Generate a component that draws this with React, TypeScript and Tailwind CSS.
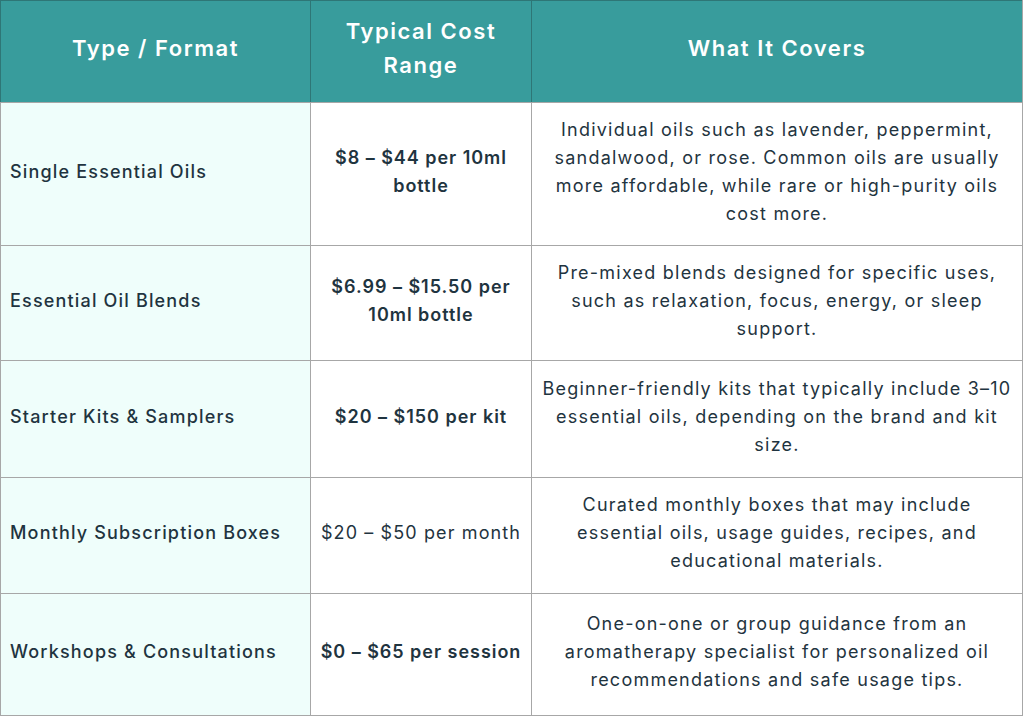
import React from "react";

const rows: { type: string; cost: string[]; costBold: boolean; covers: string[] }[] = [
  {
    type: "Single Essential Oils",
    cost: ["$8 – $44 per 10ml", "bottle"],
    costBold: true,
    covers: [
      "Individual oils such as lavender, peppermint,",
      "sandalwood, or rose. Common oils are usually",
      "more affordable, while rare or high-purity oils",
      "cost more.",
    ],
  },
  {
    type: "Essential Oil Blends",
    cost: ["$6.99 – $15.50 per", "10ml bottle"],
    costBold: true,
    covers: [
      "Pre-mixed blends designed for specific uses,",
      "such as relaxation, focus, energy, or sleep",
      "support.",
    ],
  },
  {
    type: "Starter Kits & Samplers",
    cost: ["$20 – $150 per kit"],
    costBold: true,
    covers: [
      "Beginner-friendly kits that typically include 3–10",
      "essential oils, depending on the brand and kit",
      "size.",
    ],
  },
  {
    type: "Monthly Subscription Boxes",
    cost: ["$20 – $50 per month"],
    costBold: false,
    covers: [
      "Curated monthly boxes that may include",
      "essential oils, usage guides, recipes, and",
      "educational materials.",
    ],
  },
  {
    type: "Workshops & Consultations",
    cost: ["$0 – $65 per session"],
    costBold: true,
    covers: [
      "One-on-one or group guidance from an",
      "aromatherapy specialist for personalized oil",
      "recommendations and safe usage tips.",
    ],
  },
];

const rowHeights = ["h-[143px]", "h-[115px]", "h-[117px]", "h-[116px]", "h-[122px]"];

export default function App() {
  return (
    <div className="w-[1024px] h-[717px] bg-white overflow-hidden" style={{ fontFamily: 'Inter, "Noto Sans", sans-serif' }}>
      <div className="w-[1023px] border-r border-b border-[#a7a7a7]">
        <div className="grid grid-cols-[310px_221px_1fr] h-[102px] bg-[#389c9c] text-white font-semibold text-[22px] leading-[34px] tracking-[0.07em] border-t border-l border-[#2e7676]">
          <div className="flex items-center justify-center border-r border-[#2e7676] text-center pb-[7px]">Type / Format</div>
          <div className="flex items-center justify-center border-r border-[#2e7676] text-center pb-[7px]">
            Typical Cost
            <br />
            Range
          </div>
          <div className="flex items-center justify-center text-center pb-[7px]">What It Covers</div>
        </div>
        {rows.map((r, i) => (
          <div
            key={r.type}
            className={`grid grid-cols-[310px_221px_1fr] ${rowHeights[i]} text-[#1f3440] text-[18px] leading-[28px] border-l border-t border-[#a7a7a7]`}
          >
            <div className="flex items-center bg-[#effefb] border-r border-[#a7a7a7] pl-[9px] font-medium tracking-[0.065em] pb-[5px] whitespace-nowrap">{r.type}</div>
            <div
              className={`flex flex-col items-center justify-center border-r border-[#a7a7a7] text-center whitespace-nowrap pb-[5px] ${
                r.costBold ? "font-semibold tracking-[0.054em]" : "font-normal tracking-[0.062em]"
              }`}
            >
              {r.cost.map((c) => (
                <span key={c}>{c}</span>
              ))}
            </div>
            <div className="flex flex-col items-center justify-center text-center whitespace-nowrap tracking-[0.068em] pb-[5px]">
              {r.covers.map((c) => (
                <span key={c}>{c}</span>
              ))}
            </div>
          </div>
        ))}
      </div>
    </div>
  );
}
